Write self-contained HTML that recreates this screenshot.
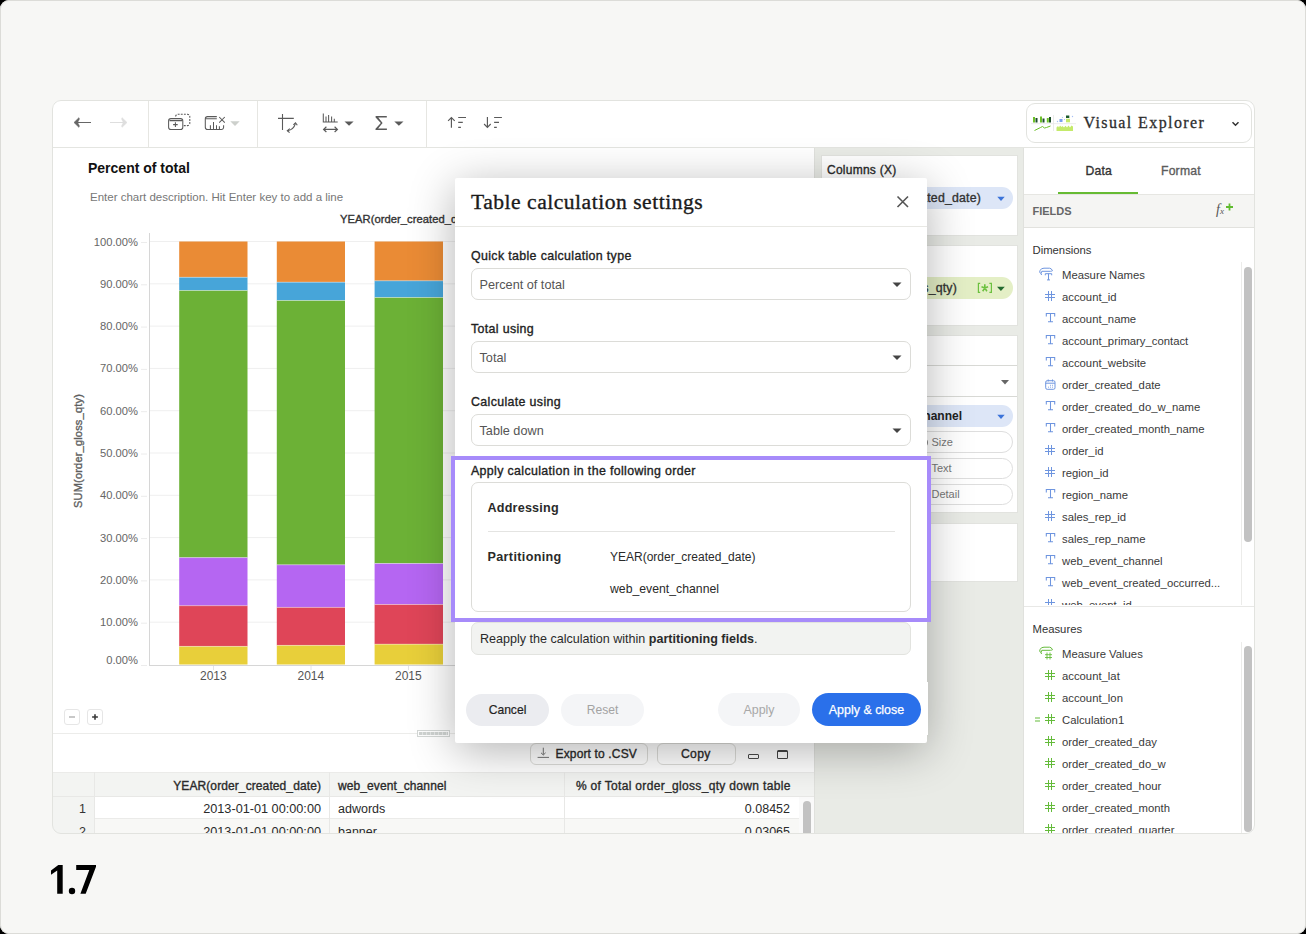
<!DOCTYPE html>
<html><head><meta charset="utf-8">
<style>
*{box-sizing:border-box;margin:0;padding:0}
html,body{width:1306px;height:934px;overflow:hidden;background:#000}
body{font-family:"Liberation Sans",sans-serif;color:#333;position:relative}
.abs{position:absolute}
#page{position:absolute;left:0;top:0;width:1306px;height:934px;background:#f7f7f5;box-shadow:inset 0 0 0 1px #dcdcd8;border-radius:9px;overflow:hidden}
#frame{position:absolute;left:52px;top:100px;width:1203px;height:734px;background:#fff;border-radius:9px;overflow:hidden}
#c{position:absolute;left:-52px;top:-100px;width:1306px;height:934px}
#frameb{position:absolute;left:52px;top:100px;width:1203px;height:734px;border:1px solid #e2e3df;border-radius:9px;pointer-events:none}
.t{position:absolute;white-space:nowrap;line-height:1}
svg{position:absolute;overflow:visible}
.hl{position:absolute;height:1px;background:#e6e6e2}
.vl{position:absolute;width:1px;background:#e6e6e2}
.fi{position:absolute;left:1062px;font-size:11.3px;color:#3a3a3a;white-space:nowrap;line-height:1;margin-top:1px}
.ic{position:absolute;left:1044px}
.sb{font-weight:normal!important;-webkit-text-stroke:0.35px currentColor}
</style></head><body>
<div id="page">
<div id="frame"><div id="c">
  <!-- ================= TOOLBAR ================= -->
  <div class="hl" style="left:52px;top:147px;width:1203px;background:#e4e5e1"></div>
  <div class="vl" style="left:148px;top:100px;height:47px"></div>
  <div class="vl" style="left:257px;top:100px;height:47px"></div>
  <div class="vl" style="left:426px;top:100px;height:47px"></div>
  <!-- back / forward -->
  <svg style="left:0;top:0" width="1" height="1">
    <path d="M76.5 122.5H91" stroke="#666" stroke-width="1.1"/>
    <path d="M74 122.5L78.9 117.7L79.4 119L77.6 122.5L79.4 126L78.9 127.3Z" fill="#666" stroke="#666" stroke-width="0.6" stroke-linejoin="round"/>
    <path d="M110 122.5H124.5" stroke="#dedede" stroke-width="1.1"/>
    <path d="M127 122.5L122.1 117.7L121.6 119L123.4 122.5L121.6 126L122.1 127.3Z" fill="#dedede" stroke="#dedede" stroke-width="0.6" stroke-linejoin="round"/>
    <!-- duplicate sheet -->
    <g fill="none" stroke="#5a5a5a" stroke-width="1.05">
      <rect x="168.6" y="118.6" width="14.2" height="10.9" rx="2.3"/>
      <path d="M169.5 120.6H182"/>
      <path d="M175.4 122.3V127M173.1 124.6H177.7"/>
      <path d="M175.6 116.6a2.4 2.4 0 0 1 2.4-2.4h9.4a2.4 2.4 0 0 1 2.4 2.4v6.6a2.4 2.4 0 0 1-2.4 2.4h-4.4" stroke-dasharray="1.9 1.2"/>
    </g>
    <!-- clear chart -->
    <g fill="none" stroke="#5a5a5a" stroke-width="1.05">
      <path d="M216.8 116.6H207.6a2.3 2.3 0 0 0-2.3 2.3V127.2a2.3 2.3 0 0 0 2.3 2.3H221.3a2.3 2.3 0 0 0 2.3-2.3V125.2"/>
      <path d="M206 118.7H216.8"/>
      <path d="M210.4 129.5V125.2M213.5 129.5V122M216.5 129.5V125.2M219.4 129.5V126.2"/>
      <path d="M219.2 117L224.8 122.7M224.8 117L219.2 122.7"/>
    </g>
    <path d="M230.3 121.3H239.7L235 125.9Z" fill="#cdd0cc"/>
    <!-- swap axes -->
    <g fill="none" stroke="#5a5a5a" stroke-width="1.1">
      <path d="M282.5 113.9V130M278 118.4H293.8"/>
      <path d="M287.6 130.6Q293.6 129.8 295.4 123.6"/>
      <path d="M289.8 128.6L287.3 130.7L289.6 132.6"/>
      <path d="M293.4 124.9L295.5 122.8L297.3 125.3"/>
    </g>
    <!-- bars + arrows -->
    <g fill="none" stroke="#5a5a5a" stroke-width="1.05">
      <path d="M323.3 113.4V121.9H337.7M326 121.9V116.6M328.6 121.9V115M331.6 121.9V116.6M334.3 121.9V118.7"/>
      <path d="M323.8 129.4H337.2M326.4 126.8L323.6 129.4L326.4 132M334.6 126.8L337.4 129.4L334.6 132" stroke-width="1.2"/>
    </g>
    <path d="M344.5 121.4H353.6L349.05 125.8Z" fill="#5a5a5a"/>
    <!-- sigma -->
    <path d="M375.6 116H386.8V117.6H378.3L382.6 123.1L378.1 128.4H386.9V130H375.5V128.7L380.8 123.1L375.6 117.4Z" fill="#5a5a5a"/>
    <path d="M394.3 121.4H403.5L398.9 125.8Z" fill="#5a5a5a"/>
    <!-- sort asc / desc -->
    <g fill="none" stroke="#5a5a5a" stroke-width="1.15">
      <path d="M451.4 127.8V117.8M448.1 120.9L451.4 117.6L454.7 120.9"/>
      <path d="M458.2 117.5H466M458.2 122.4H462.8M458.2 127.4H460.9"/>
      <path d="M487.4 117.1V127.2M484.1 124L487.4 127.4L490.7 124"/>
      <path d="M494.1 117.5H501.9M494.1 122.4H499M494.1 127.4H496.8"/>
    </g>
  </svg>
  <!-- Visual Explorer -->
  <div class="abs" style="left:1026px;top:103px;width:226px;height:40px;border:1px solid #e2e3df;border-radius:9px"></div>
  <svg style="left:0;top:0" width="1" height="1">
    <g>
      <rect x="1033" y="117" width="2" height="5.5" fill="#6cc028"/>
      <rect x="1035.5" y="118" width="2" height="4.5" fill="#1d4d2a"/>
      <rect x="1040" y="116.5" width="2" height="6" fill="#6cc028"/>
      <rect x="1042.5" y="118.5" width="2" height="4" fill="#1d4d2a"/>
      <rect x="1046.8" y="118" width="2" height="4.5" fill="#6cc028"/>
      <rect x="1049" y="117" width="2" height="5.5" fill="#1d4d2a"/>
      <path d="M1031 123.7H1076" stroke="#e6e6e6" stroke-width="0.8"/>
      <path d="M1053.5 115V131" stroke="#e6e6e6" stroke-width="0.8"/>
      <path d="M1034.5 130.5L1040.5 127.5L1042.5 126.5L1044.5 128L1046.5 127.5L1050.5 126" stroke="#6cc028" stroke-width="1" fill="none"/>
      <path d="M1056.5 131V127.5L1058 126L1059 127.5L1060 125.5L1061.5 127L1062.5 126L1064 127.5L1065.5 125.8L1067 127.5L1068.5 125.5L1070 127.5L1071.5 125.5L1073 126.5V131Z" fill="#c4ea6a"/>
      <rect x="1059.5" y="119" width="3" height="3" fill="#7aa0ef"/>
      <circle cx="1057.5" cy="121.5" r="0.7" fill="#a7c0f4"/>
      <circle cx="1062.5" cy="117.5" r="0.6" fill="#a7c0f4"/>
      <circle cx="1064.5" cy="119.5" r="0.6" fill="#a7c0f4"/>
      <circle cx="1072.5" cy="116.5" r="0.7" fill="#a7c0f4"/>
      <rect x="1066" y="115.5" width="3.3" height="2.5" fill="#1d5a2c"/>
      <rect x="1066" y="118.8" width="4" height="3.5" fill="#c4ea6a"/>
    </g>
    <path d="M1232.5 122.3L1235.5 125.2L1238.5 122.3" fill="none" stroke="#333" stroke-width="1.5"/>
  </svg>
  <div class="t" style="left:1083.5px;top:115px;font-family:'Liberation Serif',serif;font-size:16px;letter-spacing:1.4px;color:#2e2e2e;-webkit-text-stroke:0.3px #2e2e2e">Visual Explorer</div>

  <!-- ================= CHART AREA ================= -->
  <div class="t" style="left:88px;top:160.5px;font-size:14px;font-weight:bold;color:#111">Percent of total</div>
  <div class="t" style="left:90px;top:191.5px;font-size:11.5px;color:#777">Enter chart description. Hit Enter key to add a line</div>
  <div class="t sb" style="left:340px;top:213.5px;font-size:11.2px;color:#333;letter-spacing:0.05px">YEAR(order_created_date)</div>
  <div class="t sb" style="left:77.5px;top:450.7px;font-size:11px;letter-spacing:0.2px;color:#5e5e5e;transform:translate(-50%,-50%) rotate(-90deg)">SUM(order_gloss_qty)</div>
  <svg style="left:0;top:0" width="1" height="1">
    <g stroke="#efefef" stroke-width="1">
      <path d="M150 241.5H815M150 283.8H815M150 326.1H815M150 368.4H815M150 410.7H815M150 453H815M150 495.3H815M150 537.6H815M150 579.9H815M150 622.2H815"/>
    </g>
    <g stroke="#ececec" stroke-width="1">
      <path d="M141 242.5H147M141 284.8H147M141 327.1H147M141 369.4H147M141 411.7H147M141 454.0H147M141 496.3H147M141 538.6H147M141 580.9H147M141 623.2H147M141 665.5H147"/>
    </g>
    <path d="M149.5 233V665.5" stroke="#d6d6d6" stroke-width="1"/>
    <path d="M149 665.5H815" stroke="#d6d6d6" stroke-width="1"/>
    <path d="M213.5 666V670M311 666V670M408.5 666V670" stroke="#e4e4e4"/>
    <!-- bar 2013 -->
    <g>
      <rect x="179.2" y="241.5" width="68.3" height="35.8" fill="#ea8b35"/>
      <rect x="179.2" y="277.3" width="68.3" height="13.2" fill="#47a5d9"/>
      <rect x="179.2" y="290.5" width="68.3" height="267.1" fill="#6cb136"/>
      <rect x="179.2" y="557.6" width="68.3" height="48.1" fill="#b566f2"/>
      <rect x="179.2" y="605.7" width="68.3" height="40.7" fill="#df4558"/>
      <rect x="179.2" y="646.4" width="68.3" height="18.1" fill="#e8cf3a"/>
    </g>
    <g>
      <rect x="276.8" y="241.5" width="68.2" height="40.7" fill="#ea8b35"/>
      <rect x="276.8" y="282.2" width="68.2" height="18.3" fill="#47a5d9"/>
      <rect x="276.8" y="300.5" width="68.2" height="264.3" fill="#6cb136"/>
      <rect x="276.8" y="564.8" width="68.2" height="42.6" fill="#b566f2"/>
      <rect x="276.8" y="607.4" width="68.2" height="38" fill="#df4558"/>
      <rect x="276.8" y="645.4" width="68.2" height="19.1" fill="#e8cf3a"/>
    </g>
    <g>
      <rect x="374.6" y="241.5" width="68.4" height="39.3" fill="#ea8b35"/>
      <rect x="374.6" y="280.8" width="68.4" height="16.7" fill="#47a5d9"/>
      <rect x="374.6" y="297.5" width="68.4" height="266" fill="#6cb136"/>
      <rect x="374.6" y="563.5" width="68.4" height="41" fill="#b566f2"/>
      <rect x="374.6" y="604.5" width="68.4" height="39.7" fill="#df4558"/>
      <rect x="374.6" y="644.2" width="68.4" height="20.3" fill="#e8cf3a"/>
    </g>
    <g stroke="rgba(255,255,255,.45)" stroke-width="0.8">
      <path d="M179.2 277.3h68.3M179.2 290.5h68.3M179.2 557.6h68.3M179.2 605.7h68.3M179.2 646.4h68.3"/>
      <path d="M276.8 282.2h68.2M276.8 300.5h68.2M276.8 564.8h68.2M276.8 607.4h68.2M276.8 645.4h68.2"/>
      <path d="M374.6 280.8h68.4M374.6 297.5h68.4M374.6 563.5h68.4M374.6 604.5h68.4M374.6 644.2h68.4"/>
    </g>
  </svg>
  <div class="t" style="right:1168px;top:236.5px;font-size:11.2px;color:#666">100.00%</div>
  <div class="t" style="right:1168px;top:278.8px;font-size:11.2px;color:#666">90.00%</div>
  <div class="t" style="right:1168px;top:321.1px;font-size:11.2px;color:#666">80.00%</div>
  <div class="t" style="right:1168px;top:363.4px;font-size:11.2px;color:#666">70.00%</div>
  <div class="t" style="right:1168px;top:405.7px;font-size:11.2px;color:#666">60.00%</div>
  <div class="t" style="right:1168px;top:448px;font-size:11.2px;color:#666">50.00%</div>
  <div class="t" style="right:1168px;top:490.3px;font-size:11.2px;color:#666">40.00%</div>
  <div class="t" style="right:1168px;top:532.6px;font-size:11.2px;color:#666">30.00%</div>
  <div class="t" style="right:1168px;top:574.9px;font-size:11.2px;color:#666">20.00%</div>
  <div class="t" style="right:1168px;top:617.2px;font-size:11.2px;color:#666">10.00%</div>
  <div class="t" style="right:1168px;top:655px;font-size:11.2px;color:#666">0.00%</div>
  <div class="t" style="left:200px;top:670px;font-size:12px;color:#555">2013</div>
  <div class="t" style="left:297.5px;top:670px;font-size:12px;color:#555">2014</div>
  <div class="t" style="left:395px;top:670px;font-size:12px;color:#555">2015</div>
  <!-- zoom buttons -->
  <div class="abs" style="left:64px;top:709px;width:16px;height:16px;border:1px solid #e6e6e6;border-radius:3px"></div>
  <div class="abs" style="left:69.2px;top:716px;width:5.6px;height:1.7px;background:#c8c8c8"></div>
  <div class="abs" style="left:87px;top:709px;width:16px;height:16px;border:1px solid #e6e6e6;border-radius:3px"></div>
  <svg style="left:0;top:0" width="1" height="1"><path d="M95 714.2V719.8M92.1 717H97.9" stroke="#3a3a3a" stroke-width="1.6"/></svg>
  <div class="hl" style="left:52px;top:733px;width:763px;background:#ececea"></div>
  <div class="abs" style="left:417px;top:730px;width:33px;height:7px;border:1px solid #d3d7d5;background:#fff"></div><div class="abs" style="left:419px;top:732px;width:29px;height:3px;background:repeating-linear-gradient(90deg,#cfd3d1 0 3px,#e4e7e6 3px 4px)"></div>

  <!-- ================= TABLE ================= -->
  <div class="abs" style="left:529.5px;top:743px;width:118px;height:21.5px;border:1px solid #dcdcd8;border-radius:6px"></div>
  <svg style="left:0;top:0" width="1" height="1"><path d="M543.3 747.7V754.6M541 752.8L543.3 755L545.6 752.8M537.6 757.4H549" fill="none" stroke="#666" stroke-width="0.9"/></svg>
  <div class="t sb" style="left:555.5px;top:748px;font-size:12px;letter-spacing:0.15px;color:#2a2a2a">Export to .CSV</div>
  <div class="abs" style="left:656.5px;top:743px;width:79px;height:21.5px;border:1px solid #dcdcd8;border-radius:6px"></div>
  <div class="t sb" style="left:681px;top:748px;font-size:12.2px;letter-spacing:0.3px;color:#2a2a2a">Copy</div>
  <div class="abs" style="left:748px;top:754px;width:11px;height:5px;border:1.8px solid #4a4a4a;border-radius:1px"></div>
  <div class="abs" style="left:777px;top:750px;width:11px;height:9px;border:1.4px solid #444;border-top-width:2.5px;border-radius:1.5px"></div>
  <div class="abs" style="left:52px;top:772px;width:747px;height:24.5px;background:#f3f4f2;border-top:1px solid #ebebe9;border-bottom:1px solid #e8e8e6"></div>
  <div class="abs" style="left:52px;top:796.5px;width:42.5px;height:40px;background:#f3f4f2"></div>
  <div class="abs" style="left:94.5px;top:796.5px;width:704.5px;height:22.5px;background:#fff;border-bottom:1px solid #ebebe9"></div>
  <div class="abs" style="left:94.5px;top:819px;width:704.5px;height:20px;background:#f8f8f6"></div>
  <div class="vl" style="left:94px;top:772px;height:70px;background:#e8e8e6"></div>
  <div class="vl" style="left:329px;top:772px;height:70px;background:#e8e8e6"></div>
  <div class="vl" style="left:564px;top:772px;height:70px;background:#e8e8e6"></div>
  <div class="vl" style="left:798.5px;top:772px;height:70px;background:#e8e8e6"></div>
  <div class="abs" style="left:799px;top:772px;width:16px;height:24.5px;background:#f3f4f2;border-top:1px solid #ebebe9;border-bottom:1px solid #e8e8e6"></div><div class="abs" style="left:799px;top:796.5px;width:16px;height:40px;background:#fafafa"></div>
  <div class="abs" style="left:803px;top:800.5px;width:8px;height:40px;background:#c2c2c2;border-radius:4px"></div>
  <div class="t sb" style="right:985px;top:779.5px;font-size:12px;letter-spacing:0.1px;color:#2a2a2a">YEAR(order_created_date)</div>
  <div class="t sb" style="left:338px;top:779.5px;font-size:12px;letter-spacing:0.1px;color:#2a2a2a">web_event_channel</div>
  <div class="t sb" style="right:515.3px;top:779.5px;font-size:12px;letter-spacing:0.33px;color:#2a2a2a">% of Total order_gloss_qty down table</div>
  <div class="t" style="right:1220px;top:803px;font-size:12.5px;color:#333">1</div>
  <div class="t" style="right:985px;top:803px;font-size:12.7px;color:#2a2a2a">2013-01-01 00:00:00</div>
  <div class="t" style="left:338px;top:803px;font-size:12.5px;color:#2a2a2a">adwords</div>
  <div class="t" style="right:516px;top:803px;font-size:12.5px;color:#2a2a2a">0.08452</div>
  <div class="t" style="right:1220px;top:825.5px;font-size:12.5px;color:#333">2</div>
  <div class="t" style="right:985px;top:825.5px;font-size:12.7px;color:#2a2a2a">2013-01-01 00:00:00</div>
  <div class="t" style="left:338px;top:825.5px;font-size:12.5px;color:#2a2a2a">banner</div>
  <div class="t" style="right:516px;top:825.5px;font-size:12.5px;color:#2a2a2a">0.03065</div>

  <!-- ================= SHELF PANEL ================= -->
  <div class="abs" style="left:814px;top:148px;width:210px;height:686px;background:#e9ebe6;border-left:1px solid #e0e1dd"></div>
  <div class="abs" style="left:821px;top:155px;width:197px;height:81px;background:#fff;border:1px solid #e2e3df"></div>
  <div class="t sb" style="left:827px;top:164px;font-size:12px;letter-spacing:0.25px;color:#2a2a2a">Columns (X)</div>
  <div class="abs" style="left:830px;top:187px;width:183px;height:22px;background:#dde6f7;border-radius:11px"></div>
  <div class="t sb" style="right:325px;top:192px;font-size:12.3px;letter-spacing:0.2px;color:#333">YEAR(order_created_date)</div>
  <svg style="left:0;top:0" width="1" height="1"><path d="M997.3 196.8H1004.7L1001 201.1Z" fill="#3b73d9"/></svg>
  <div class="abs" style="left:821px;top:244.5px;width:197px;height:81px;background:#fff;border:1px solid #e2e3df"></div>
  <div class="abs" style="left:830px;top:277px;width:183px;height:22px;background:#e4efc6;border-radius:11px"></div>
  <div class="t sb" style="right:349px;top:282px;font-size:12.3px;letter-spacing:0.2px;color:#333">SUM(order_gloss_qty)</div>
  <svg style="left:0;top:0" width="1" height="1"><g fill="none" stroke="#6cc13f"><path d="M980.2 283.4H978.4V292.4H980.2M989.4 283.4H991.4V292.4H989.4" stroke-width="1.2"/><path d="M984.8 284.3V287.9M981.5 286.8L984.8 287.9L988.1 286.8M982.7 291.2L984.8 287.9L986.9 291.2" stroke-width="1.6"/></g></svg>
  <svg style="left:0;top:0" width="1" height="1"><path d="M997 286.8H1004.8L1000.9 290.9Z" fill="#236b2e"/></svg>
  <div class="abs" style="left:821px;top:335px;width:197px;height:178px;background:#fff;border:1px solid #e2e3df"></div>
  <div class="hl" style="left:822px;top:365px;width:195px;background:#d8d9d5"></div>
  <div class="hl" style="left:822px;top:396px;width:195px;background:#d8d9d5"></div>
  <svg style="left:0;top:0" width="1" height="1"><path d="M1001 380H1009L1005 384.5Z" fill="#666"/></svg>
  <div class="abs" style="left:830px;top:405px;width:183px;height:22px;background:#dde6f7;border-radius:11px"></div>
  <div class="t" style="right:344px;top:410px;font-size:12px;font-weight:bold;color:#222">web_event_channel</div>
  <svg style="left:0;top:0" width="1" height="1"><path d="M997.3 414.8H1004.7L1001 419.1Z" fill="#3b73d9"/></svg>
  <div class="abs" style="left:830px;top:431px;width:183px;height:21.5px;border:1px solid #dedede;border-radius:11px;background:#fff"></div>
  <div class="abs" style="left:922px;top:438.5px;width:6px;height:7px;border:1.3px solid #888;border-radius:50%"></div><div class="t" style="left:931.5px;top:437px;font-size:11px;color:#777">Size</div>
  <div class="abs" style="left:830px;top:457.5px;width:183px;height:21px;border:1px solid #dedede;border-radius:11px;background:#fff"></div>
  <div class="t" style="left:931.5px;top:463px;font-size:11px;color:#777">Text</div>
  <div class="abs" style="left:830px;top:483.5px;width:183px;height:21px;border:1px solid #dedede;border-radius:11px;background:#fff"></div>
  <div class="t" style="left:931.5px;top:489px;font-size:11px;color:#777">Detail</div>
  <div class="abs" style="left:821px;top:522.5px;width:197px;height:59px;background:#fff;border:1px solid #e2e3df"></div>

  <!-- ================= RIGHT PANEL ================= -->
  <div class="abs" style="left:1023px;top:148px;width:232px;height:686px;background:#fff;border-left:1px solid #e0e1dd"></div>
  <div class="t sb" style="left:1085.5px;top:165px;font-size:12.2px;letter-spacing:0.2px;color:#333">Data</div>
  <div class="t sb" style="left:1161px;top:165px;font-size:12.2px;letter-spacing:0.2px;color:#5c5c5c">Format</div>
  <div class="abs" style="left:1058px;top:192px;width:80px;height:2.5px;background:#66bb33"></div>
  <div class="abs" style="left:1024px;top:194px;width:231px;height:34px;background:#f5f5f3;border-top:1px solid #e6e6e2;border-bottom:1px solid #e2e2de"></div>
  <div class="t" style="left:1032.5px;top:206px;font-size:11px;font-weight:bold;color:#666;letter-spacing:0px">FIELDS</div>
  <div class="t" style="left:1216px;top:203px;font-family:'Liberation Serif',serif;font-style:italic;font-size:14px;color:#555">f<span style="font-size:9px">x</span></div>
  <svg style="left:0;top:0" width="1" height="1"><path d="M1229.5 203.5V210.5M1226 207H1233" stroke="#5fbb2f" stroke-width="1.8"/></svg>
  <div class="t" style="left:1032.5px;top:245px;font-size:11.3px;color:#333">Dimensions</div>
  <div class="abs" style="left:1240.5px;top:262px;width:1px;height:343px;background:#ececea"></div>
  <div class="abs" style="left:1244px;top:267px;width:8px;height:275px;background:#c2c2c2;border-radius:4px"></div>
  <div id="dims"><div class="abs" style="left:1024px;top:262px;width:216px;height:343px;overflow:hidden"><div class="abs" style="left:-1024px;top:-262px;width:1306px;height:934px">
  <svg style="left:0;top:0" width="1" height="1"><g fill="none" stroke="#6e95df" stroke-width="1"><path d="M1040.5 273.5Q1039 272.0 1040.2 270.3Q1041 268.2 1044 268.2H1049.6Q1051.3 268.2 1052.5 270.7"/><path d="M1041.5 275.0Q1040.5 273.5 1041.8 271.3H1050.5Q1051.5 271.3 1052.5 270.7"/><path d="M1045.3 275.3V273.7H1051.7V275.3M1048.5 273.7V279.9M1047 279.9H1050"/></g></svg>
  <div class="fi" style="top:269.0px">Measure Names</div>
  <svg style="left:0;top:0" width="1" height="1"><path d="M1048.5 291.0V301.0M1051.5 291.0V301.0M1045 294.5H1055M1045 297.5H1055" fill="none" stroke="#6e95df" stroke-width="1"/></svg>
  <div class="fi" style="top:291.0px">account_id</div>
  <svg style="left:0;top:0" width="1" height="1"><path d="M1046.3 316.5V313.5H1054.7V316.5M1050.5 313.5V321.8M1048.0 321.8H1053.0" fill="none" stroke="#6e95df" stroke-width="1.05"/></svg>
  <div class="fi" style="top:313.0px">account_name</div>
  <svg style="left:0;top:0" width="1" height="1"><path d="M1046.3 338.5V335.5H1054.7V338.5M1050.5 335.5V343.8M1048.0 343.8H1053.0" fill="none" stroke="#6e95df" stroke-width="1.05"/></svg>
  <div class="fi" style="top:335.0px">account_primary_contact</div>
  <svg style="left:0;top:0" width="1" height="1"><path d="M1046.3 360.5V357.5H1054.7V360.5M1050.5 357.5V365.8M1048.0 365.8H1053.0" fill="none" stroke="#6e95df" stroke-width="1.05"/></svg>
  <div class="fi" style="top:357.0px">account_website</div>
  <svg style="left:0;top:0" width="1" height="1"><g fill="none" stroke="#6e95df" stroke-width="1"><rect x="1045.7" y="380.7" width="9.3" height="8.6" rx="1.5"/><path d="M1045.7 383.2H1055M1048.2 379.5V381.5M1052.5 379.5V381.5"/></g><g fill="#6e95df"><rect x="1048" y="386.7" width="0.9" height="0.9"/><rect x="1050" y="384.8" width="0.9" height="0.9"/><rect x="1052" y="384.8" width="0.9" height="0.9"/><rect x="1050" y="386.7" width="0.9" height="0.9"/><rect x="1052" y="386.7" width="0.9" height="0.9"/></g></svg>
  <div class="fi" style="top:379.0px">order_created_date</div>
  <svg style="left:0;top:0" width="1" height="1"><path d="M1046.3 404.5V401.5H1054.7V404.5M1050.5 401.5V409.8M1048.0 409.8H1053.0" fill="none" stroke="#6e95df" stroke-width="1.05"/></svg>
  <div class="fi" style="top:401.0px">order_created_do_w_name</div>
  <svg style="left:0;top:0" width="1" height="1"><path d="M1046.3 426.5V423.5H1054.7V426.5M1050.5 423.5V431.8M1048.0 431.8H1053.0" fill="none" stroke="#6e95df" stroke-width="1.05"/></svg>
  <div class="fi" style="top:423.0px">order_created_month_name</div>
  <svg style="left:0;top:0" width="1" height="1"><path d="M1048.5 445.0V455.0M1051.5 445.0V455.0M1045 448.5H1055M1045 451.5H1055" fill="none" stroke="#6e95df" stroke-width="1"/></svg>
  <div class="fi" style="top:445.0px">order_id</div>
  <svg style="left:0;top:0" width="1" height="1"><path d="M1048.5 467.0V477.0M1051.5 467.0V477.0M1045 470.5H1055M1045 473.5H1055" fill="none" stroke="#6e95df" stroke-width="1"/></svg>
  <div class="fi" style="top:467.0px">region_id</div>
  <svg style="left:0;top:0" width="1" height="1"><path d="M1046.3 492.5V489.5H1054.7V492.5M1050.5 489.5V497.8M1048.0 497.8H1053.0" fill="none" stroke="#6e95df" stroke-width="1.05"/></svg>
  <div class="fi" style="top:489.0px">region_name</div>
  <svg style="left:0;top:0" width="1" height="1"><path d="M1048.5 511.0V521.0M1051.5 511.0V521.0M1045 514.5H1055M1045 517.5H1055" fill="none" stroke="#6e95df" stroke-width="1"/></svg>
  <div class="fi" style="top:511.0px">sales_rep_id</div>
  <svg style="left:0;top:0" width="1" height="1"><path d="M1046.3 536.5V533.5H1054.7V536.5M1050.5 533.5V541.8M1048.0 541.8H1053.0" fill="none" stroke="#6e95df" stroke-width="1.05"/></svg>
  <div class="fi" style="top:533.0px">sales_rep_name</div>
  <svg style="left:0;top:0" width="1" height="1"><path d="M1046.3 558.5V555.5H1054.7V558.5M1050.5 555.5V563.8M1048.0 563.8H1053.0" fill="none" stroke="#6e95df" stroke-width="1.05"/></svg>
  <div class="fi" style="top:555.0px">web_event_channel</div>
  <svg style="left:0;top:0" width="1" height="1"><path d="M1046.3 580.5V577.5H1054.7V580.5M1050.5 577.5V585.8M1048.0 585.8H1053.0" fill="none" stroke="#6e95df" stroke-width="1.05"/></svg>
  <div class="fi" style="top:577.0px">web_event_created_occurred...</div>
  <svg style="left:0;top:0" width="1" height="1"><path d="M1048.5 599.0V609.0M1051.5 599.0V609.0M1045 602.5H1055M1045 605.5H1055" fill="none" stroke="#6e95df" stroke-width="1"/></svg>
  <div class="fi" style="top:599.0px">web_event_id</div>
  </div></div></div><!--/dims-->
  <div class="hl" style="left:1024px;top:605.5px;width:231px;background:#e8e8e6"></div>
  <div class="t" style="left:1032.5px;top:624px;font-size:11.3px;color:#333">Measures</div>
  <div class="abs" style="left:1240.5px;top:642px;width:1px;height:192px;background:#ececea"></div>
  <div class="abs" style="left:1244px;top:646px;width:8px;height:186px;background:#c2c2c2;border-radius:4px"></div>
  <div id="meas"><svg style="left:0;top:0" width="1" height="1"><g fill="none" stroke="#64bb3a" stroke-width="1"><path d="M1040.5 652.5Q1039 651.0 1040.2 649.3Q1041 647.2 1044 647.2H1049.6Q1051.3 647.2 1052.5 649.7"/><path d="M1041.5 654.0Q1040.5 652.5 1041.8 650.3H1050.5Q1051.5 650.3 1052.5 649.7"/></g><path d="M1047 652.5V659.5M1050 652.5V659.5M1045 654.7H1052M1045 657.5H1052" fill="none" stroke="#64bb3a" stroke-width="0.9"/></svg>
  <div class="fi" style="top:648.0px">Measure Values</div>
  <svg style="left:0;top:0" width="1" height="1"><path d="M1048.5 670.0V680.0M1051.5 670.0V680.0M1045 673.5H1055M1045 676.5H1055" fill="none" stroke="#64bb3a" stroke-width="1"/></svg>
  <div class="fi" style="top:670.0px">account_lat</div>
  <svg style="left:0;top:0" width="1" height="1"><path d="M1048.5 692.0V702.0M1051.5 692.0V702.0M1045 695.5H1055M1045 698.5H1055" fill="none" stroke="#64bb3a" stroke-width="1"/></svg>
  <div class="fi" style="top:692.0px">account_lon</div>
  <svg style="left:0;top:0" width="1" height="1"><path d="M1048.5 714.0V724.0M1051.5 714.0V724.0M1045 717.5H1055M1045 720.5H1055" fill="none" stroke="#64bb3a" stroke-width="1"/></svg>
  <svg style="left:0;top:0" width="1" height="1"><path d="M1035 718.0H1040M1035 721.0H1040" stroke="#64bb3a" stroke-width="1.1"/></svg>
  <div class="fi" style="top:714.0px">Calculation1</div>
  <svg style="left:0;top:0" width="1" height="1"><path d="M1048.5 736.0V746.0M1051.5 736.0V746.0M1045 739.5H1055M1045 742.5H1055" fill="none" stroke="#64bb3a" stroke-width="1"/></svg>
  <div class="fi" style="top:736.0px">order_created_day</div>
  <svg style="left:0;top:0" width="1" height="1"><path d="M1048.5 758.0V768.0M1051.5 758.0V768.0M1045 761.5H1055M1045 764.5H1055" fill="none" stroke="#64bb3a" stroke-width="1"/></svg>
  <div class="fi" style="top:758.0px">order_created_do_w</div>
  <svg style="left:0;top:0" width="1" height="1"><path d="M1048.5 780.0V790.0M1051.5 780.0V790.0M1045 783.5H1055M1045 786.5H1055" fill="none" stroke="#64bb3a" stroke-width="1"/></svg>
  <div class="fi" style="top:780.0px">order_created_hour</div>
  <svg style="left:0;top:0" width="1" height="1"><path d="M1048.5 802.0V812.0M1051.5 802.0V812.0M1045 805.5H1055M1045 808.5H1055" fill="none" stroke="#64bb3a" stroke-width="1"/></svg>
  <div class="fi" style="top:802.0px">order_created_month</div>
  <svg style="left:0;top:0" width="1" height="1"><path d="M1048.5 824.0V834.0M1051.5 824.0V834.0M1045 827.5H1055M1045 830.5H1055" fill="none" stroke="#64bb3a" stroke-width="1"/></svg>
  <div class="fi" style="top:824.0px">order_created_quarter</div></div><!--/meas-->
</div></div>
<div id="frameb"></div>

<!-- ================= DIALOG ================= -->
<div id="dlg" class="abs" style="left:455px;top:178px;width:472px;height:565px;background:#fff;border-radius:2px;box-shadow:0 8px 46px rgba(0,0,0,.30)">
  <div class="t" style="left:16px;top:14px;font-family:'Liberation Serif',serif;font-size:21.6px;letter-spacing:0.5px;color:#1a1a1a;-webkit-text-stroke:0.35px #1a1a1a">Table calculation settings</div>
  <svg style="left:0;top:0" width="1" height="1"><path d="M442.5 18.5L453 29M453 18.5L442.5 29" stroke="#555" stroke-width="1.6"/></svg>
  <div class="abs" style="left:0;top:48px;width:472px;height:1px;background:#e8e8e4"></div>

  <div class="t sb" style="left:16px;top:71.5px;font-size:12.4px;letter-spacing:0.35px;color:#222">Quick table calculation type</div>
  <div class="abs" style="left:16px;top:90px;width:440px;height:32px;border:1px solid #dcdcd8;border-radius:7px"></div>
  <div class="t" style="left:24.5px;top:100.5px;font-size:12.7px;color:#555">Percent of total</div>
  <svg style="left:0;top:0" width="1" height="1"><path d="M437.5 104.5H446.5L442 109Z" fill="#444"/></svg>

  <div class="t sb" style="left:16px;top:144.5px;font-size:12.4px;letter-spacing:0.35px;color:#222">Total using</div>
  <div class="abs" style="left:16px;top:163px;width:440px;height:32px;border:1px solid #dcdcd8;border-radius:7px"></div>
  <div class="t" style="left:24.5px;top:173.5px;font-size:12.7px;color:#555">Total</div>
  <svg style="left:0;top:0" width="1" height="1"><path d="M437.5 177.5H446.5L442 182Z" fill="#444"/></svg>

  <div class="t sb" style="left:16px;top:217.5px;font-size:12.4px;letter-spacing:0.35px;color:#222">Calculate using</div>
  <div class="abs" style="left:16px;top:236px;width:440px;height:32px;border:1px solid #dcdcd8;border-radius:7px"></div>
  <div class="t" style="left:24.5px;top:246.5px;font-size:12.7px;color:#555">Table down</div>
  <svg style="left:0;top:0" width="1" height="1"><path d="M437.5 250.5H446.5L442 255Z" fill="#444"/></svg>

  <div class="t sb" style="left:16px;top:286.5px;font-size:12.4px;letter-spacing:0.35px;color:#222">Apply calculation in the following order</div>
  <div class="abs" style="left:16px;top:304px;width:440px;height:130px;border:1px solid #dcdcd8;border-radius:7px"></div>
  <div class="t" style="left:32.5px;top:323.5px;font-size:12.6px;font-weight:bold;color:#2a2a2a;letter-spacing:0.2px">Addressing</div>
  <div class="abs" style="left:32.5px;top:353px;width:407px;height:1px;background:#e4e4e2"></div>
  <div class="t" style="left:32.5px;top:372.5px;font-size:12.6px;font-weight:bold;color:#2a2a2a;letter-spacing:0.35px">Partitioning</div>
  <div class="t" style="left:155px;top:372.5px;font-size:12px;color:#2a2a2a">YEAR(order_created_date)</div>
  <div class="t" style="left:155px;top:405px;font-size:12.25px;color:#2a2a2a">web_event_channel</div>

  <div class="abs" style="left:16px;top:444px;width:440px;height:33px;border:1px solid #e2e3df;border-radius:7px;background:#f2f3f1"></div>
  <div class="t" style="left:25px;top:454.5px;font-size:12.55px;color:#2a2a2a">Reapply the calculation within <b>partitioning fields</b>.</div>

</div>
<div class="abs" style="left:455px;top:682px;width:473px;height:53px;background:#fff"></div>
<div class="abs" style="left:466px;top:694px;width:83px;height:32px;border-radius:16px;background:#ebecf0"></div>
<div class="t" style="left:466px;width:83px;text-align:center;top:703.5px;font-size:12.1px;color:#1f1f1f;-webkit-text-stroke:0.2px #1f1f1f">Cancel</div>
<div class="abs" style="left:561px;top:694px;width:83px;height:32px;border-radius:16px;background:#f4f5f7"></div>
<div class="t" style="left:561px;width:83px;text-align:center;top:703.5px;font-size:12.1px;color:#a3a3a3">Reset</div>
<div class="abs" style="left:718px;top:693px;width:82px;height:33px;border-radius:16.5px;background:#f4f5f7"></div>
<div class="t" style="left:718px;width:82px;text-align:center;top:704px;font-size:12.45px;color:#a8a8a8">Apply</div>
<div class="abs" style="left:812px;top:693px;width:109px;height:33px;border-radius:16.5px;background:#2a70ea"></div>
<div class="t" style="left:812px;width:109px;text-align:center;top:704px;font-size:12.45px;color:#fff;-webkit-text-stroke:0.25px #fff">Apply &amp; close</div>
<div class="abs" style="left:451px;top:456px;width:480px;height:166px;border:4px solid #a78bfa"></div>

<svg style="left:0;top:0" width="1" height="1"><path d="M58.3 865.1H62.7V893.8H57.2V870.6L51 874.8V870.4Z M76.2 865.1H96V866.8L85.7 893.8H80.4L89.3 870H76.2Z" fill="#000"/><circle cx="72" cy="891" r="3.2" fill="#000"/></svg>
</div>
</body></html>
